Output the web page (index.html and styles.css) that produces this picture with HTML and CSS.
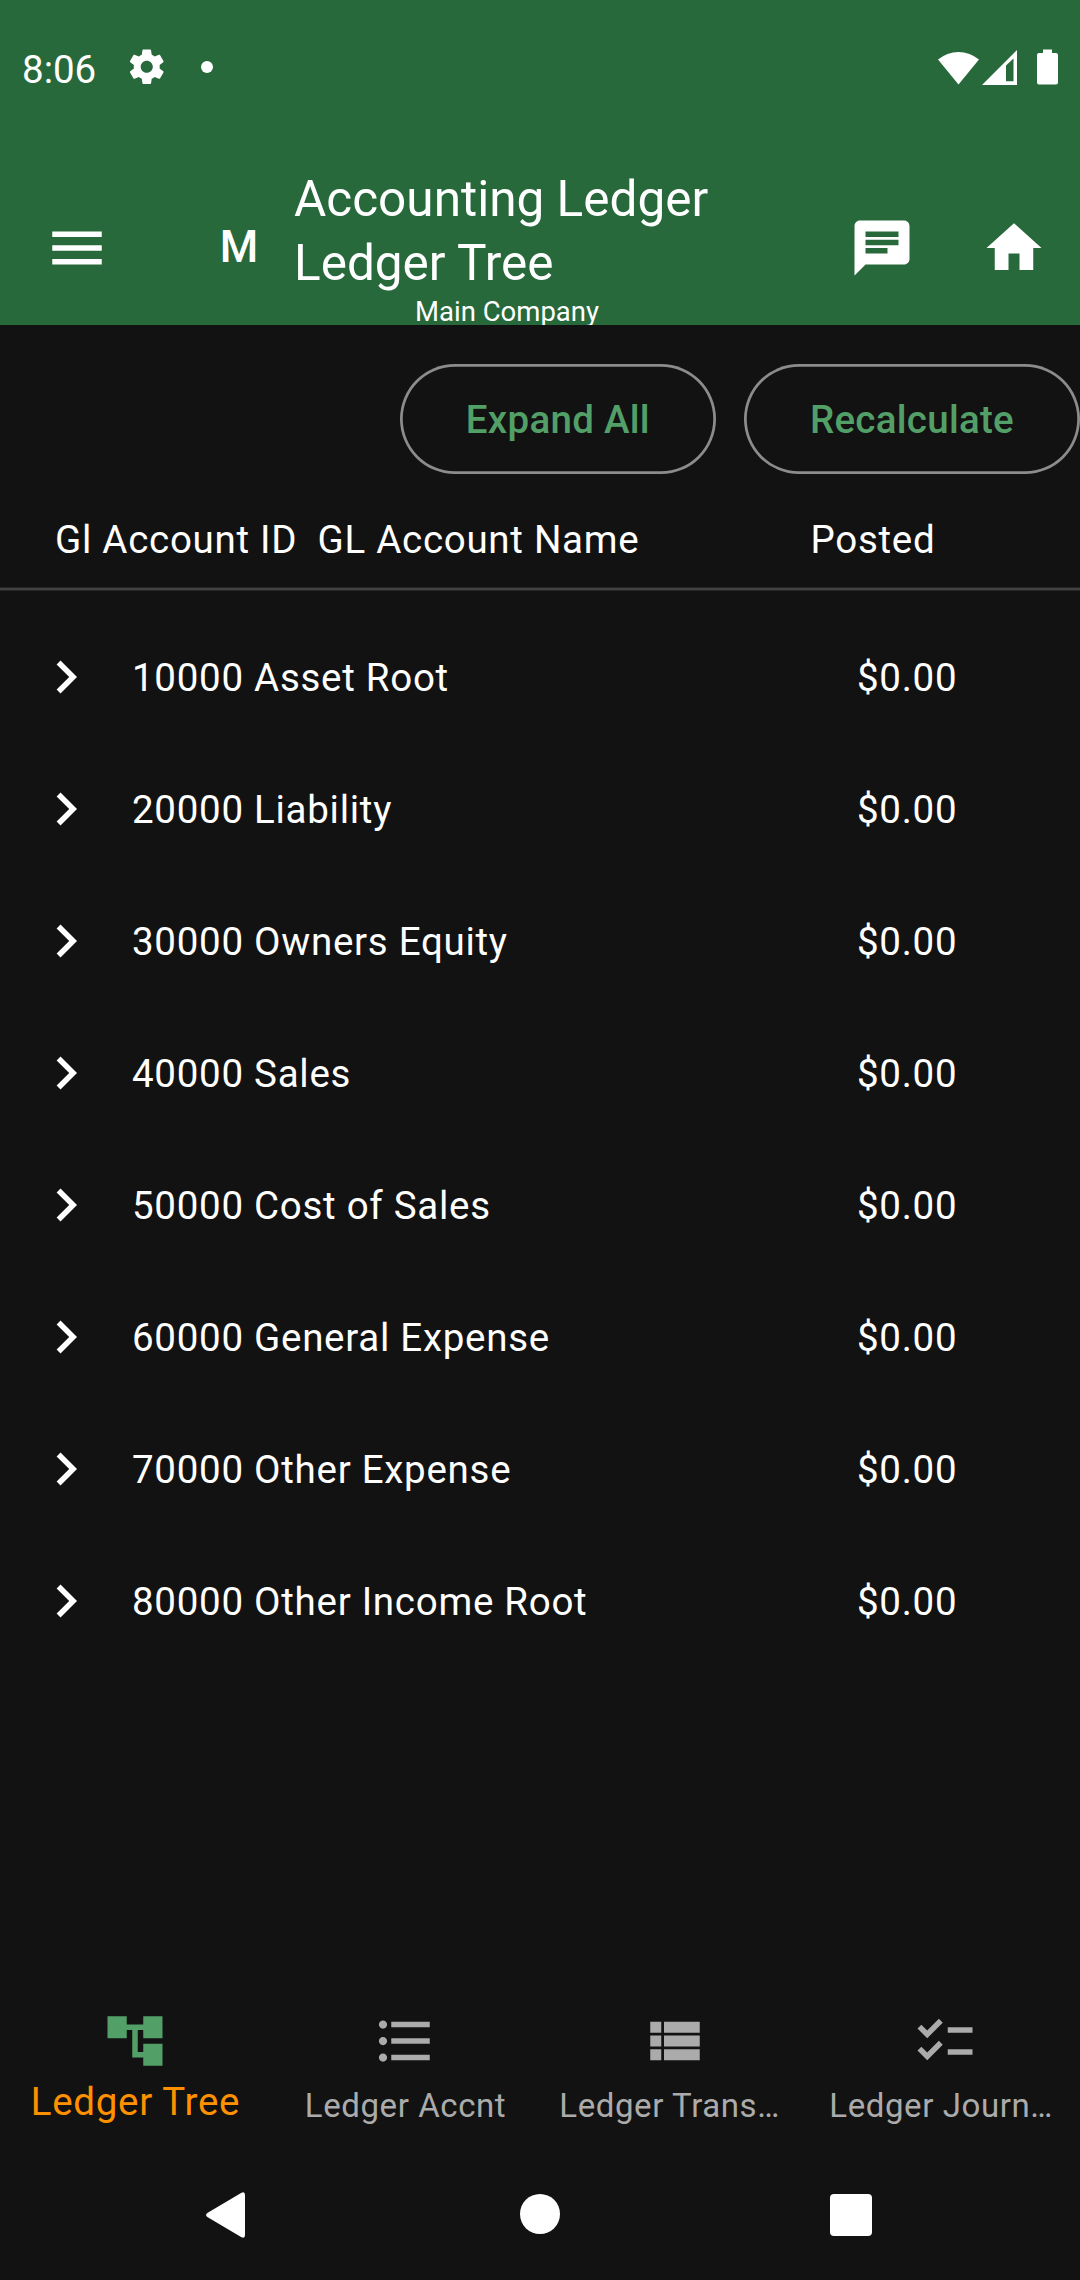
FILE: index.html
```
<!DOCTYPE html>
<html lang="en">
<head>
<meta charset="utf-8">
<title>Accounting Ledger - Ledger Tree</title>
<link rel="stylesheet" href="styles.css">
</head>
<body>
<div class="screen">
  <header class="header">
    <div class="status-bar">
      <span class="clock">8:06</span>
      <svg class="status-gear" viewBox="0 0 24 24"><path d="M19.43 12.98c.04-.32.07-.64.07-.98s-.03-.66-.07-.98l2.11-1.65c.19-.15.24-.42.12-.64l-2-3.46c-.12-.22-.39-.3-.61-.22l-2.49 1c-.52-.4-1.08-.73-1.69-.98l-.38-2.65C14.46 2.18 14.25 2 14 2h-4c-.25 0-.46.18-.49.42l-.38 2.65c-.61.25-1.17.59-1.69.98l-2.49-1c-.23-.09-.49 0-.61.22l-2 3.46c-.13.22-.07.49.12.64l2.11 1.65c-.04.32-.07.65-.07.98s.03.66.07.98l-2.11 1.65c-.19.15-.24.42-.12.64l2 3.46c.12.22.39.3.61.22l2.49-1c.52.4 1.08.73 1.69.98l.38 2.65c.03.24.24.42.49.42h4c.25 0 .46-.18.49-.42l.38-2.65c.61-.25 1.17-.59 1.69-.98l2.49 1c.23.09.49 0 .61-.22l2-3.46c.12-.22.07-.49-.12-.64l-2.11-1.65zM12 15.5c-1.93 0-3.5-1.57-3.5-3.5s1.57-3.5 3.5-3.5 3.5 1.57 3.5 3.5-1.57 3.5-3.5 3.5z"/></svg>
      <span class="status-dot"></span>
      <div class="status-right">
        <svg class="wifi" viewBox="0 0 41 35"><path d="M20.5 34.5L0 9.600A31.500 31.500 0 0 1 41 9.600z"/></svg>
        <svg class="signal" viewBox="0 0 35 35"><path fill-rule="evenodd" d="M35 0V35H0zM24 15.500V31.300H31.500V8.500z"/></svg>
        <svg class="battery" viewBox="0 0 21 36"><path d="M6 0.500h9v3.500h4a2 2 0 0 1 2 2v27.500a2 2 0 0 1-2 2H2a2 2 0 0 1-2-2V6a2 2 0 0 1 2-2h4z"/></svg>
      </div>
    </div>
    <div class="toolbar">
      <svg class="icon" viewBox="0 0 24 24"><path d="M3 18h18v-2H3v2zm0-5h18v-2H3v2zm0-7v2h18V6H3z"/></svg>
      <span class="avatar">M</span>
      <div class="titles">
        <h1 class="title">Accounting Ledger<br>Ledger Tree</h1>
        <div class="company">Main Company</div>
      </div>
      <div class="actions">
        <svg class="icon" viewBox="0 0 24 24"><path d="M20 2H4c-1.100 0-1.990.9-1.990 2L2 22l4-4h14c1.100 0 2-.9 2-2V4c0-1.100-.9-2-2-2zM6 9h12v2H6V9zm8 5H6v-2h8v2zm4-6H6V6h12v2z"/></svg>
        <svg class="icon" viewBox="0 0 24 24"><path d="M10 20v-6h4v6h5v-8h3L12 3 2 12h3v8z"/></svg>
      </div>
    </div>
  </header>

  <main class="content">
    <div class="buttons">
      <button class="btn">Expand All</button>
      <button class="btn">Recalculate</button>
    </div>
    <div class="table-head">
      <span class="head-id">Gl Account ID</span>
      <span class="head-name">GL Account Name</span>
      <span class="head-posted">Posted</span>
    </div>
    <div class="divider"></div>
    <ul class="tree">
      <li class="row"><svg class="icon" viewBox="0 0 24 24"><path d="M10 6L8.590 7.410 13.170 12l-4.580 4.590L10 18l6-6z"/></svg><span class="account">10000 Asset Root</span><span class="amount">$0.00</span></li>
      <li class="row"><svg class="icon" viewBox="0 0 24 24"><path d="M10 6L8.590 7.410 13.170 12l-4.580 4.590L10 18l6-6z"/></svg><span class="account">20000 Liability</span><span class="amount">$0.00</span></li>
      <li class="row"><svg class="icon" viewBox="0 0 24 24"><path d="M10 6L8.590 7.410 13.170 12l-4.580 4.590L10 18l6-6z"/></svg><span class="account">30000 Owners Equity</span><span class="amount">$0.00</span></li>
      <li class="row"><svg class="icon" viewBox="0 0 24 24"><path d="M10 6L8.590 7.410 13.170 12l-4.580 4.590L10 18l6-6z"/></svg><span class="account">40000 Sales</span><span class="amount">$0.00</span></li>
      <li class="row"><svg class="icon" viewBox="0 0 24 24"><path d="M10 6L8.590 7.410 13.170 12l-4.580 4.590L10 18l6-6z"/></svg><span class="account">50000 Cost of Sales</span><span class="amount">$0.00</span></li>
      <li class="row"><svg class="icon" viewBox="0 0 24 24"><path d="M10 6L8.590 7.410 13.170 12l-4.580 4.590L10 18l6-6z"/></svg><span class="account">60000 General Expense</span><span class="amount">$0.00</span></li>
      <li class="row"><svg class="icon" viewBox="0 0 24 24"><path d="M10 6L8.590 7.410 13.170 12l-4.580 4.590L10 18l6-6z"/></svg><span class="account">70000 Other Expense</span><span class="amount">$0.00</span></li>
      <li class="row"><svg class="icon" viewBox="0 0 24 24"><path d="M10 6L8.590 7.410 13.170 12l-4.580 4.590L10 18l6-6z"/></svg><span class="account">80000 Other Income Root</span><span class="amount">$0.00</span></li>
    </ul>
  </main>

  <nav class="tabs">
    <div class="tab tab-active">
      <svg class="icon" viewBox="0 0 24 24"><path d="M22 11V3h-7v3H9V3H2v8h7V8h2v10h4v3h7v-8h-7v3h-2V8h2v3z"/></svg>
      <span class="tab-label">Ledger Tree</span>
    </div>
    <div class="tab">
      <svg class="icon" viewBox="0 0 24 24"><path d="M4 10.500c-.83 0-1.500.67-1.500 1.500s.67 1.500 1.500 1.500 1.500-.67 1.500-1.500-.67-1.500-1.500-1.500zm0-6c-.83 0-1.500.67-1.500 1.500S3.170 7.500 4 7.500 5.500 6.830 5.500 6 4.830 4.500 4 4.500zm0 12c-.83 0-1.500.68-1.500 1.500s.68 1.500 1.500 1.500 1.500-.68 1.500-1.500-.67-1.500-1.500-1.500zM7 19h14v-2H7v2zm0-6h14v-2H7v2zm0-8v2h14V5H7z"/></svg>
      <span class="tab-label">Ledger Accnt</span>
    </div>
    <div class="tab">
      <svg class="icon" viewBox="0 0 24 24"><path d="M3 14h4v-4H3v4zm0 5h4v-4H3v4zM3 9h4V5H3v4zm5 5h13v-4H8v4zm0 5h13v-4H8v4zM8 5v4h13V5H8z"/></svg>
      <span class="tab-label tab-label-cut">Ledger Trans…</span>
    </div>
    <div class="tab">
      <svg class="icon" viewBox="0 0 24 24"><path d="M22 7h-9v2h9V7zm0 8h-9v2h9v-2zM5.540 11L2 7.460l1.410-1.410 2.120 2.120 4.240-4.240 1.410 1.410L5.540 11zm0 8L2 15.460l1.410-1.410 2.120 2.120 4.240-4.240 1.410 1.410L5.540 19z"/></svg>
      <span class="tab-label tab-label-cut">Ledger Journ…</span>
    </div>
  </nav>

  <div class="system-nav">
    <svg class="nav-back" viewBox="0 0 39 46"><path d="M35.500 .8Q39 -.8 39 3V43Q39 46.800 35.500 45.200L1.300 25Q-1.200 23 1.300 21z"/></svg>
    <span class="nav-home"></span>
    <span class="nav-recent"></span>
  </div>
</div>
</body>
</html>
```
FILE: styles.css
```
* { box-sizing: border-box; }

body {
  margin: 0;
  background: #121212;
  color: #fff;
  font-family: Roboto, "Noto Sans", sans-serif;
}

.screen {
  width: 1080px;
  height: 2280px;
  display: flex;
  flex-direction: column;
  overflow: hidden;
}

svg { display: block; flex: none; fill: currentColor; }

.icon { width: 66px; height: 66px; }

/* Header */
.header {
  flex: none;
  height: 325px;
  background: #27693b;
  overflow: hidden;
}

.status-bar {
  height: 171px;
  padding: 46px 22px 0 22px;
  display: flex;
  align-items: flex-start;
}

.clock {
  width: 104px;
  padding-top: 1px;
  font-size: 38.500px;
  line-height: 46px;
}

.status-gear { width: 41.500px; height: 41.500px; }

.status-dot {
  width: 12px;
  height: 12px;
  margin: 15px 0 0 33.500px;
  border-radius: 50%;
  background: #fff;
}

.status-right {
  margin-left: auto;
  display: flex;
  padding-top: 3px;
}

.wifi { width: 41px; height: 35px; margin: 1px 3px 0 0; }
.signal { width: 35px; height: 35px; margin: 1px 20px 0 0; }
.battery { width: 21px; height: 36px; }

.toolbar {
  height: 154px;
  padding: 0 33px 0 44px;
  display: flex;
  align-items: center;
}

.avatar {
  width: 88px;
  margin: 0 11px 3px 85px;
  text-align: center;
  font-size: 44px;
  line-height: 52px;
  font-weight: 500;
}

.titles { width: 426px; flex: none; padding-bottom: 2px; }

.title {
  margin: 0;
  font-size: 49.500px;
  font-weight: 400;
  line-height: 64px;
  white-space: nowrap;
}

.company {
  font-size: 27.500px;
  line-height: 33px;
  text-align: center;
}

.actions {
  margin-left: auto;
  display: flex;
  gap: 66px;
}

/* Content */
.content { flex: 1; }

.buttons {
  padding-top: 39px;
  display: flex;
  justify-content: flex-end;
  gap: 28px;
}

.btn {
  height: 110px;
  padding: 2px 66px 0;
  border: 0;
  border-radius: 55px;
  box-shadow: inset 0 0 0 2.750px #8c8c8c;
  background: none;
  color: #52a068;
  font: 500 38.500px/46px Roboto, "Noto Sans", sans-serif;
  letter-spacing: .275px;
}

.table-head,
.tree {
  font-size: 38.500px;
  letter-spacing: .72px;
  white-space: nowrap;
}

.table-head {
  height: 113px;
  padding: 42px 0 0 55px;
  display: flex;
  line-height: 48px;
}

.head-id { width: 262.500px; }
.head-name { width: 493px; }

.divider {
  height: 4px;
  background: #424242;
  border: solid #262626;
  border-width: 1px 0;
}

.tree {
  margin: 0;
  padding: 20px 0 0;
  list-style: none;
}

.row {
  height: 132px;
  padding-left: 33px;
  display: flex;
  align-items: center;
  line-height: 46px;
}

.account,
.amount { padding-top: 2px; }

.account { width: 725px; margin-left: 33px; }

/* Bottom tabs */
.tabs {
  flex: none;
  height: 154px;
  display: grid;
  grid-template-columns: repeat(4, 1fr);
  color: #ababab;
}

.tab {
  padding-top: 14px;
  display: flex;
  flex-direction: column;
  align-items: center;
}

.tab-label {
  margin-top: 11px;
  padding-left: 1px;
  font-size: 33px;
  line-height: 42px;
  letter-spacing: .59px;
  white-space: nowrap;
}

.tab-label-cut { width: 231.400px; padding-left: 0; }

.tab-active { color: #52a068; }

.tab-active .tab-label {
  margin-top: 7px;
  font-size: 38.500px;
  letter-spacing: .6875px;
  color: #ff9100;
}

/* System navigation */
.system-nav {
  flex: none;
  height: 132px;
  padding: 44px 0 0 206px;
  display: flex;
}

.nav-back { width: 39px; height: 46px; }

.nav-home {
  width: 40px;
  height: 40px;
  margin: 2px 0 0 275px;
  border-radius: 50%;
  background: #fff;
}

.nav-recent {
  width: 41.500px;
  height: 42px;
  margin: 2px 0 0 270px;
  border-radius: 4px;
  background: #fff;
}
```
